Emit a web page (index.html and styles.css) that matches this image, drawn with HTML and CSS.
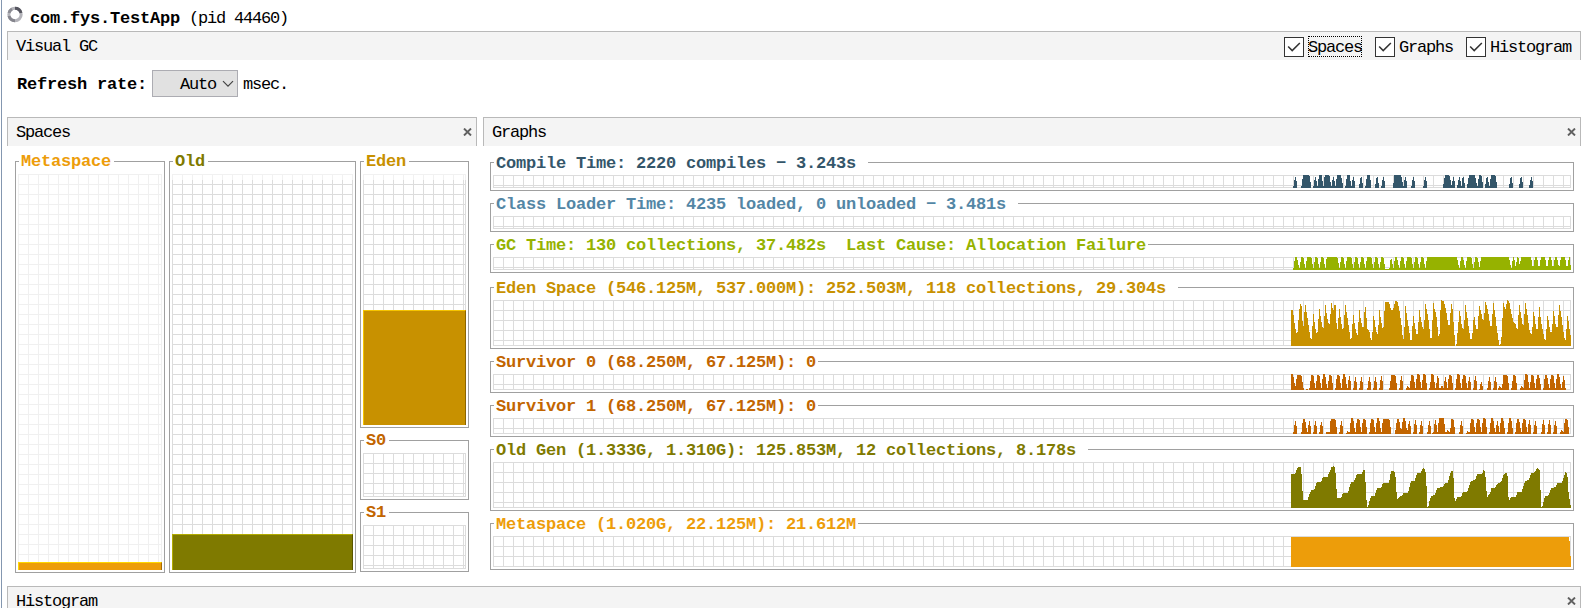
FILE: index.html
```html
<!DOCTYPE html>
<html lang="en">
<head>
<meta charset="utf-8">
<title>Visual GC</title>
<link rel="stylesheet" href="styles.css">
</head>
<body>
<div class="window">
  <header class="app-title">
    <svg class="spinner" width="16" height="17" viewBox="0 0 16 17" fill="none" stroke-width="3">
      <circle cx="8" cy="8.5" r="6.2" stroke="#b4b4ba"/>
      <path d="M8 2.3A6.2 6.2 0 0 1 14 7" stroke="#55555f"/>
      <path d="M8 14.7A6.2 6.2 0 0 1 2 10" stroke="#85858d"/>
      <path d="M2 7A6.2 6.2 0 0 1 5 3" stroke="#8c8c94"/>
    </svg>
    <b class="strong">com.fys.TestApp</b><span class="pid">(pid 44460)</span>
  </header>

  <section class="bar">
    <span>Visual GC</span>
    <div class="checks">
      <label class="check"><svg class="tick" viewBox="0 0 20 20"><path d="M3.500 9.500L8 14L16.500 5.500"/></svg><span class="focused">Spaces</span></label>
      <label class="check"><svg class="tick" viewBox="0 0 20 20"><path d="M3.500 9.500L8 14L16.500 5.500"/></svg><span>Graphs</span></label>
      <label class="check"><svg class="tick" viewBox="0 0 20 20"><path d="M3.500 9.500L8 14L16.500 5.500"/></svg><span>Histogram</span></label>
    </div>
  </section>

  <div class="refresh">
    <b class="strong">Refresh rate:</b>
    <div class="select"><span>Auto</span><svg width="12" height="8" viewBox="0 0 12 8"><path d="M1 1.200L6 6.200L11 1.200" fill="none" stroke="#444" stroke-width="1.200"/></svg></div>
    <span>msec.</span>
  </div>

  <main class="panels">
    <section class="spaces-panel">
      <div class="bar"><span>Spaces</span><svg class="close" viewBox="0 0 9 8"><path d="M1 .5L8 7.500M8 .5L1 7.500"/></svg></div>
      <div class="spaces">
        <div class="frame meta faint"><span class="legend">Metaspace</span><div class="grid"><div class="fill fill-meta"></div></div></div>
        <div class="frame old"><span class="legend">Old</span><div class="grid reserved"><div class="fill fill-old"></div></div></div>
        <div class="young">
          <div class="frame eden"><span class="legend">Eden</span><div class="grid reserved"><div class="fill fill-eden"></div></div></div>
          <div class="frame survivor"><span class="legend">S0</span><div class="grid"></div></div>
          <div class="frame survivor"><span class="legend">S1</span><div class="grid"></div></div>
        </div>
      </div>
    </section>

    <section class="graphs-panel">
      <div class="bar"><span>Graphs</span><svg class="close" viewBox="0 0 9 8"><path d="M1 .5L8 7.500M8 .5L1 7.500"/></svg></div>
      <div class="graphs">
        <div class="frame h29 compile"><span class="legend">Compile Time: 2220 compiles − 3.243s </span><div class="grid"><svg class="plot" id="compile"></svg></div></div>
        <div class="frame h29 loader"><span class="legend">Class Loader Time: 4235 loaded, 0 unloaded − 3.481s </span><div class="grid"></div></div>
        <div class="frame h29 gc"><span class="legend">GC Time: 130 collections, 37.482s  Last Cause: Allocation Failure</span><div class="grid"><svg class="plot" id="gc"></svg></div></div>
        <div class="frame h62 eden spaced"><span class="legend">Eden Space (546.125M, 537.000M): 252.503M, 118 collections, 29.304s </span><div class="grid"><svg class="plot" id="eden"></svg></div></div>
        <div class="frame h32 survivor"><span class="legend">Survivor 0 (68.250M, 67.125M): 0</span><div class="grid"><svg class="plot" id="survivor0"></svg></div></div>
        <div class="frame h32 survivor"><span class="legend">Survivor 1 (68.250M, 67.125M): 0</span><div class="grid"><svg class="plot" id="survivor1"></svg></div></div>
        <div class="frame h62 old"><span class="legend">Old Gen (1.333G, 1.310G): 125.853M, 12 collections, 8.178s </span><div class="grid"><svg class="plot" id="old"></svg></div></div>
        <div class="frame h47 meta"><span class="legend">Metaspace (1.020G, 22.125M): 21.612M</span><div class="grid"><svg class="plot" id="meta"></svg></div></div>
      </div>
    </section>
  </main>

  <section class="bar histogram"><span>Histogram</span><svg class="close" viewBox="0 0 9 8"><path d="M1 .5L8 7.500M8 .5L1 7.500"/></svg></section>
</div>
<script src="charts.js"></script>
</body>
</html>
```
FILE: styles.css
```css
* { box-sizing: border-box; }
body {
  margin: 0;
  width: 1586px;
  height: 608px;
  overflow: hidden;
  background: #fff;
  color: #000;
  font: 17px/20px "Liberation Mono", monospace;
  letter-spacing: -1.202px;
}
.window {
  height: 608px;
  overflow: hidden;
  padding: 0 5px 0 5px;
  border-left: 1px solid #8497b0;
  margin-left: 1px;
  display: flex;
  flex-direction: column;
  white-space: nowrap;
}
.strong { font-size: 17px; letter-spacing: -0.202px; }
.app-title { display: flex; align-items: flex-start; flex: none; height: 31px; padding-top: 6px; }
.spinner { margin-right: 7px; flex: none; }
.app-title .strong, .pid { margin-top: 3px; }
.pid { margin-left: 9px; }

.bar {
  display: flex;
  justify-content: space-between;
  align-items: center;
  flex: none;
  height: 29px;
  padding: 2px 4px 0 8px;
  background: #f4f4f4;
  border: 1px solid #b9b9b9;
  border-bottom: 0;
}
.histogram { height: 22px; padding-top: 8px; overflow: visible; }
.histogram > span { line-height: 18px; }
.close { width: 9px; height: 8px; fill: none; stroke: #606060; stroke-width: 1.900; margin-bottom: 2px; }
.checks { display: flex; gap: 13px; margin: -1px 5px 0 0; }
.check { display: flex; gap: 4px; align-items: center; }
.check span { width: auto; height: 21px; line-height: 23px; }
.tick { width: 20px; height: 20px; border: 1px solid #333; background: #fff; fill: none; stroke: #333; stroke-width: 1.700; }
.focused { outline: 1px dotted #000; outline-offset: -1px; }

.refresh { display: flex; align-items: center; flex: none; height: 57px; padding: 0 0 10px 10px; }
.refresh > span { margin-left: 5px; padding-top: 2px; }
.refresh .strong { padding-top: 2px; }
.select {
  display: flex;
  align-items: center;
  justify-content: flex-end;
  gap: 6px;
  width: 86px;
  height: 27px;
  margin-left: 5px;
  padding-right: 3px;
  border: 1px solid #acacb2;
  background: #e1e1e1;
}
.select span { padding-top: 3px; }

.panels { display: flex; flex: none; gap: 6px; height: 469px; }
.spaces-panel { width: 470px; }
.graphs-panel { width: 1098px; }
.spaces { display: flex; gap: 4px; padding: 15px 8px 0; height: 427px; }
.spaces > .meta { width: 150px; }
.spaces > .old { width: 187px; }
.young { display: flex; flex-direction: column; gap: 12px; width: 109px; }
.young .eden { height: 267px; }
.young .survivor { height: 60px; }

.graphs { display: flex; flex-direction: column; gap: 12px; padding: 16px 7px 0; }
.h29 { height: 29px; }
.h32 { height: 32px; }
.h47 { height: 47px; }
.h62 { height: 62px; }
.spaced { margin-top: 2px; }

.frame { position: relative; display: flex; padding: 12px 2px 2px; border: 1px solid #a0a0a0; color: var(--ink); }
.legend {
  position: absolute;
  left: 3px;
  top: -8px;
  padding: 0 2px;
  background: #fff;
  font-size: 17px;
  font-weight: bold;
  letter-spacing: -0.202px;
  white-space: pre;
  line-height: 18px;
}
.spaces .legend { top: -9px; padding-right: 3px; }
.grid {
  --line: #dcdcdc;
  flex: 1;
  display: flex;
  align-items: flex-end;
  justify-content: flex-end;
  background:
    linear-gradient(var(--line), var(--line)) right / 1px 100% no-repeat,
    linear-gradient(var(--line), var(--line)) bottom / 100% 1px no-repeat,
    repeating-linear-gradient(to right, var(--line) 0 1px, transparent 1px 10px),
    repeating-linear-gradient(to bottom, var(--line) 0 1px, transparent 1px 10px);
}
.reserved {
  background:
    linear-gradient(#fff9, #fff9) top / 100% 6px no-repeat,
    linear-gradient(var(--line), var(--line)) right / 1px 100% no-repeat,
    repeating-linear-gradient(to right, var(--line) 0 1px, transparent 1px 10px),
    repeating-linear-gradient(to bottom, var(--line) 0 1px, transparent 1px 10px);
}
.faint .grid { --line: #f0f0f0; }
.compile { --ink: #34566a; }
.loader { --ink: #5386a5; }
.gc { --ink: #96b200; }
.eden { --ink: #c89100; }
.survivor { --ink: #c26500; }
.old { --ink: #7f7a00; }
.meta { --ink: #ed9d0a; }

.fill { width: 100%; background: var(--ink); border: 1px solid; border-bottom: 0; }
.fill-meta { height: 8px; border-color: #ffd800 #a56d07 #ffd800 #ffd800; }
.fill-old { height: 36px; border-color: #b2ab00 #595500 #b2ab00 #b2ab00; }
.fill-eden { height: 115px; border-color: #f5c400 #8c6500 #f5c400 #f5c400; }
.plot { display: block; width: 280px; height: 100%; fill: var(--ink); shape-rendering: crispEdges; }
```
FILE: charts.js
```js
// Histories are stored in thirds of a pixel; each has an early and a late block.
const LEFT = 33, BLOCK = 450, UNIT = 3, COLUMNS = 280;

// Pulse rows: [start, plateau start, plateau end, end, plateau y]
const pulses = {
  compile: { base: 114, floor: 0, height: 13, blocks: [
    [[40,45,48,52,81],[64,69,88,94,75],[100,105,108,112,81],[112,117,125,130,75],[130,134,148,154,75],[154,159,162,166,81],[166,171,183,190,75],[196,201,209,214,75],[214,219,222,226,81],[237,242,245,249,81],[256,261,270,274,75],[285,290,293,297,81],[304,309,312,316,81],[339,343,363,371,75],[370,375,378,382,81],[394,399,402,406,81],[430,435,438,442,81]],
    [[39,45,58,66,75],[65,69,72,76,81],[81,87,90,94,81],[94,98,101,105,81],[111,117,135,142,75],[142,147,154,160,75],[165,170,173,178,81],[178,183,196,202,75],[237,242,245,249,81],[267,272,275,280,81],[297,303,306,310,81]]] },
  gc: { base: 360, floor: 1, height: 13, blocks: [
    [[40,45,51,58,321],[58,64,70,76,321],[76,81,94,100,321],[100,106,112,118,321],[118,124,130,136,321],[136,140,172,179,321],[178,184,190,196,321],[196,201,214,220,321],[220,226,232,238,321],[238,244,250,256,321],[256,261,274,280,321],[280,286,292,298,321],[298,304,310,316,321],[328,332,335,340,327],[340,345,351,358,321],[358,363,370,376,321],[376,381,394,400,321],[400,406,412,418,321],[418,424,430,436,321],[436,441,450,450,321]],
    [[0,0,81,88,321],[88,93,99,106,321],[106,111,124,130,321],[130,136,142,150,321],[148,153,237,244,321],[244,249,252,258,321],[257,261,265,271,321],[268,273,303,309,321],[309,315,321,327,321],[327,333,345,351,321],[351,357,363,369,321],[369,375,381,388,321],[387,393,405,411,321],[411,417,419,423,321]]] },
  survivor0: { base: 330, floor: 0, height: 16, blocks: [
    [[33,33,39,47,282],[45,51,64,71,285],[78,78,84,84,327],[88,94,100,106,285],[106,112,118,124,285],[124,129,135,142,282],[142,148,154,160,285],[166,171,178,184,285],[184,189,195,202,282],[202,207,210,214,288],[220,225,228,232,291],[238,243,246,250,291],[262,267,270,274,291],[280,285,288,292,291],[298,303,306,310,288],[328,334,346,352,285],[358,363,366,370,288],[378,382,384,390,318],[388,394,400,407,285],[406,411,418,425,282],[424,430,436,442,282],[447,447,450,450,325]],
    [[0,3,10,17,282],[17,22,25,29,288],[30,35,39,41,318],[40,45,48,52,291],[52,57,64,70,285],[76,81,88,94,282],[94,99,106,112,285],[112,117,120,124,291],[130,135,138,142,288],[148,153,155,160,306],[172,177,180,184,291],[190,195,198,202,291],[204,208,210,216,318],[216,220,232,238,285],[244,250,256,262,285],[270,274,276,282,318],[280,286,292,299,282],[299,304,310,316,285],[316,321,327,334,285],[340,345,351,358,285],[358,363,370,376,285],[376,381,387,394,282],[394,400,402,407,288]]] },
  survivor1: { base: 462, floor: 0, height: 16, blocks: [
    [[40,45,48,52,423],[64,69,75,82,417],[82,87,90,94,423],[100,105,108,112,423],[118,123,126,130,426],[138,140,146,150,456],[148,152,166,172,417],[178,183,186,190,423],[198,202,204,208,454],[208,213,219,226,414],[226,231,238,244,417],[244,249,256,262,417],[268,273,280,286,417],[286,291,297,304,414],[304,309,328,334,417],[345,351,357,364,417],[363,369,375,382,414],[381,387,390,394,423],[400,405,408,412,420],[418,423,426,430,423],[442,447,450,454,423]],
    [[6,8,10,12,458],[10,15,18,22,420],[22,27,41,47,414],[48,52,54,60,450],[60,64,70,76,417],[88,93,96,100,423],[108,112,114,118,454],[118,123,130,136,417],[136,141,148,154,417],[154,159,166,172,414],[178,183,189,196,414],[196,201,204,208,423],[208,213,219,226,414],[232,237,243,250,414],[256,261,267,274,417],[274,279,286,292,417],[292,297,300,304,420],[310,315,318,322,423],[334,339,342,346,420],[352,357,360,364,420],[370,375,378,382,423],[390,394,396,400,450],[400,405,412,418,417]]] }
};

// Continuous curves: "x,y" pairs joined by straight segments
const curves = {
  eden: { base: 198, height: 46, blocks: [
    "33,90 39,90 42,120 48,158 52,162 57,100 60,72 64,70 67,120 70,147 73,100 76,70 80,100 85,130 91,174 95,177 100,97 104,130 108,158 112,162 118,84 123,120 128,145 131,145 136,70 141,110 148,138 151,110 154,67 158,85 161,90 164,73 167,76 171,162 174,130 178,84 182,115 187,147 190,150 196,73 200,100 205,130 211,177 214,180 220,100 225,140 230,162 233,165 238,85 243,125 250,150 253,100 257,79 262,147 268,152 272,178 276,180 281,100 286,140 291,163 294,163 298,88 303,120 308,147 310,150 315,67 327,66 333,90 339,92 345,66 348,60 353,66 358,90 364,130 368,170 372,183 376,73 381,110 388,155 391,180 394,186 400,103 405,140 410,163 413,163 418,88 424,125 429,148 432,148 436,70 442,100 447,130 449,152",
    "0,174 5,174 10,67 14,90 19,105 25,165 28,180 30,110 34,60 42,65 48,90 55,135 58,140 64,68 68,90 73,160 76,198 80,190 85,130 89,88 94,130 99,148 102,148 106,73 112,110 117,150 121,178 126,178 132,100 138,145 142,152 148,75 153,95 158,120 162,120 166,63 171,80 175,100 181,138 185,138 190,67 195,100 201,150 207,190 210,198 214,182 220,68 226,88 232,60 238,66 244,100 250,125 256,130 262,153 268,73 273,105 278,135 281,135 286,67 292,100 298,150 303,165 306,162 311,88 316,130 320,148 323,148 328,75 333,125 338,150 344,178 347,180 353,103 358,140 363,163 366,150 371,88 376,130 382,148 388,72 394,108 399,145 404,178 407,180 413,103 418,145 423,175"] },
  old: { base: 204, height: 46, blocks: [
    "33,102 45,102 51,85 54,81 63,81 64,93 67,145 69,180 82,180 93,151 102,150 111,126 124,126 129,111 142,111 150,93 154,82 158,80 163,78 166,90 169,137 171,174 184,174 189,159 204,159 213,126 222,125 231,102 245,102 250,90 252,87 255,93 258,158 261,204 264,200 273,168 284,167 291,144 304,143 309,129 327,129 333,93 343,93 346,105 351,177 357,172 368,165 370,159 384,158 393,124 404,122 411,99 422,99 429,85 433,84 437,98 441,160 442,202 445,200 449,180",
    "0,178 4,168 14,165 22,144 39,141 45,129 53,128 58,110 64,93 69,95 72,132 74,188 82,171 94,171 99,156 112,156 123,123 135,120 142,102 156,102 162,88 166,103 171,174 182,155 183,144 195,144 204,129 214,126 220,105 228,96 233,108 236,185 243,171 258,171 262,156 275,156 285,123 297,120 303,99 315,97 321,84 325,85 330,94 333,204 337,200 345,168 356,166 363,144 377,142 381,129 396,128 400,115 407,93 412,103 416,165 423,202"] },
  meta: { base: 381, height: 31, blocks: ["33,291 449,291", "0,291 417,291 418,303 420,303 421,348 423,348"] }
};

function draw(id, heights, total) {
  let d = `M0 ${total}`;
  heights.forEach((h, i) => { d += `V${total - h}H${i + 1}`; });
  const svg = document.getElementById(id);
  svg.setAttribute("viewBox", `0 0 ${COLUMNS} ${total}`);
  svg.setAttribute("preserveAspectRatio", "xMaxYMax meet");
  svg.innerHTML = `<path d="${d}V${total}Z"/>`;
}

function interpolate(points, x) {
  for (let i = 1; i < points.length; i++) {
    const [x0, y0] = points[i - 1], [x1, y1] = points[i];
    if (x >= x0 && x <= x1) return x1 === x0 ? y1 : y0 + (y1 - y0) * (x - x0) / (x1 - x0);
  }
  return null;
}

const centre = i => LEFT + (i + 0.5) * UNIT;

for (const [id, s] of Object.entries(pulses)) {
  const rows = s.blocks.flatMap((b, k) => b.map(([a, p, q, z, y]) =>
    [[a + k * BLOCK, s.base - 2], [p + k * BLOCK, y], [q + k * BLOCK, y], [z + k * BLOCK, s.base - 2]]));
  const heights = Array.from({ length: COLUMNS }, (_, i) => {
    const x = centre(i);
    const floor = x > 40 ? s.floor : 0;
    return rows.reduce((m, r) => {
      const y = interpolate(r, x);
      return y === null ? m : Math.max(m, Math.round((s.base - y) / UNIT));
    }, floor);
  });
  draw(id, heights, s.height);
}

for (const [id, s] of Object.entries(curves)) {
  const points = s.blocks.flatMap((b, k) => b.split(" ").map(p => {
    const [x, y] = p.split(",").map(Number);
    return [x + k * BLOCK, y];
  }));
  const heights = Array.from({ length: COLUMNS }, (_, i) =>
    Math.round((s.base - (interpolate(points, centre(i)) ?? s.base)) / UNIT));
  draw(id, heights, s.height);
}
```
